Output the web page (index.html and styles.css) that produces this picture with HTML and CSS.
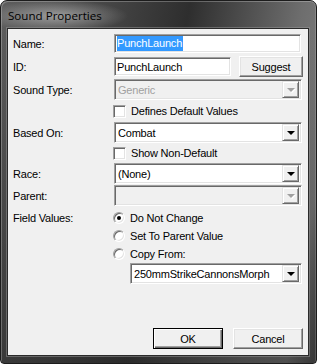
FILE: index.html
```html
<!DOCTYPE html>
<html>
<head>
<meta charset="utf-8">
<link rel="stylesheet" href="styles.css">
</head>
<body>
<div class="window">
  <div class="titlebar"><span class="title">Sound Properties</span></div>
  <div class="client">
    <div class="row r-name">
      <div class="label">Name:</div>
      <div class="field"><div class="textbox full"><span class="sel">PunchLaunch</span></div></div>
    </div>
    <div class="row r-id">
      <div class="label">ID:</div>
      <div class="field idfield">
        <div class="textbox idbox">PunchLaunch</div>
        <div class="button suggest">Suggest</div>
      </div>
    </div>
    <div class="row r-combo">
      <div class="label">Sound Type:</div>
      <div class="field"><div class="combo disabled"><span class="ctext">Generic</span><span class="dd"><span class="arrow"></span></span></div></div>
    </div>
    <div class="row r-check">
      <div class="label"></div>
      <div class="field"><span class="check"></span><span class="ctl">Defines Default Values</span></div>
    </div>
    <div class="row r-combo r-based">
      <div class="label">Based On:</div>
      <div class="field"><div class="combo"><span class="ctext">Combat</span><span class="dd"><span class="arrow"></span></span></div></div>
    </div>
    <div class="row r-check r-check2">
      <div class="label"></div>
      <div class="field"><span class="check"></span><span class="ctl">Show Non-Default</span></div>
    </div>
    <div class="row r-combo r-tight">
      <div class="label">Race:</div>
      <div class="field"><div class="combo"><span class="ctext">(None)</span><span class="dd"><span class="arrow"></span></span></div></div>
    </div>
    <div class="row r-combo r-tight">
      <div class="label">Parent:</div>
      <div class="field"><div class="combo disabled"><span class="ctext"></span><span class="dd"><span class="arrow"></span></span></div></div>
    </div>
    <div class="row r-radio r-radio1">
      <div class="label">Field Values:</div>
      <div class="field"><span class="radio on"></span><span class="rtl">Do Not Change</span></div>
    </div>
    <div class="row r-radio">
      <div class="label"></div>
      <div class="field"><span class="radio"></span><span class="rtl">Set To Parent Value</span></div>
    </div>
    <div class="row r-radio r-radio3">
      <div class="label"></div>
      <div class="field"><span class="radio"></span><span class="rtl">Copy From:</span></div>
    </div>
    <div class="row r-combo r-tight">
      <div class="label"></div>
      <div class="field copyfield"><div class="combo"><span class="ctext">250mmStrikeCannonsMorph</span><span class="dd"><span class="arrow"></span></span></div></div>
    </div>
    <div class="spacer"></div>
    <div class="buttons">
      <div class="button default">OK</div>
      <div class="button">Cancel</div>
    </div>
  </div>
</div>
</body>
</html>
```

FILE: styles.css
```css
html, body {
  margin: 0;
  padding: 0;
  background: #ffffff;
}
body {
  font-family: "Liberation Sans", Arial, sans-serif;
  font-size: 11px;
  letter-spacing: -0.2px;
  color: #000;
}
.window {
  width: 317px;
  height: 364px;
  box-sizing: border-box;
  border: 1px solid #1c1c1c;
  border-radius: 7px 7px 4px 4px;
  background:
    linear-gradient(to bottom, rgba(0,0,0,0) 0px, rgba(0,0,0,0) 28px, rgba(40,40,40,0.55) 100%),
    linear-gradient(100deg, #5e5e5e 0%, #444 30%, #2e2e2e 50%, #6e6e6e 80%, #7e7e7e 92%, #4a4a4a 100%);
  display: flex;
  flex-direction: column;
  overflow: hidden;
  box-shadow: inset 1px 1px 0 rgba(255,255,255,0.25), inset -1px 0 0 rgba(255,255,255,0.15);
}
.titlebar {
  height: 27px;
  flex: none;
  display: flex;
  align-items: center;
  padding-left: 7px;
  background: radial-gradient(ellipse 72px 16px at 55px 15px, rgba(205,205,205,0.6), rgba(205,205,205,0) 100%);
}
.title {
  font-family: "Open Sans", "Liberation Sans", sans-serif;
  font-size: 11.6px;
  letter-spacing: 0;
  color: #000;
  position: relative;
  top: 1px;
}
.client {
  flex: 1;
  margin: 0 7px 7px 6px;
  border: 1px solid #2a2a2a;
  box-shadow: 0 0 0 1px rgba(150,150,150,0.5);
  background: #f0f0f0;
  padding: 5px 5px 6px 5px;
  display: flex;
  flex-direction: column;
}
.row {
  display: flex;
  align-items: center;
  flex: none;
}
.label {
  width: 101px;
  flex: none;
}
.field {
  flex: 1;
  display: flex;
  align-items: center;
}
.r-name { height: 19px; }
.r-id { height: 21px; margin-top: 3px; }
.r-combo { height: 21px; margin-top: 2px; }
.r-check { height: 18px; margin-top: 2px; }
.r-based { margin-top: 2px; }
.r-check2 { margin-top: 1px; }
.r-tight { margin-top: 1px; }
.r-radio { height: 18px; }
.r-radio1 { margin-top: 3px; }
.r-radio3 { height: 17px; }

.textbox {
  height: 19px;
  box-sizing: border-box;
  background: #fff;
  border-top: 1px solid #a0a0a0;
  border-left: 1px solid #a0a0a0;
  border-bottom: 1px solid #ffffff;
  border-right: 1px solid #ffffff;
  box-shadow: inset 1px 1px 0 #696969, inset -1px -1px 0 #e3e3e3;
  padding: 0 2px;
  display: flex;
  align-items: center;
  white-space: nowrap;
  overflow: hidden;
}
.full { width: 187px; }
.sel {
  background: #3399ff;
  color: #fff;
  height: 15px;
  line-height: 15px;
  display: inline-block;
  padding-right: 1px;
}
.idfield { justify-content: space-between; }
.idbox { width: 117px; }
.button {
  height: 21px;
  box-sizing: border-box;
  background: #f0f0f0;
  border-top: 1px solid #ffffff;
  border-left: 1px solid #ffffff;
  border-right: 1px solid #696969;
  border-bottom: 1px solid #696969;
  box-shadow: inset -1px -1px 0 #a0a0a0, inset 1px 1px 0 #e3e3e3;
  display: flex;
  align-items: center;
  justify-content: center;
  width: 70px;
}
.suggest { width: 64px; }
.button.default {
  border: 1px solid #000;
  box-shadow: inset 1px 1px 0 #ffffff, inset -1px -1px 0 #696969, inset -2px -2px 0 #a0a0a0;
}

.combo {
  width: 188px;
  height: 21px;
  box-sizing: border-box;
  background: #fff;
  border-top: 1px solid #a0a0a0;
  border-left: 1px solid #a0a0a0;
  border-bottom: 1px solid #ffffff;
  border-right: 1px solid #ffffff;
  box-shadow: inset 1px 1px 0 #696969, inset -1px -1px 0 #e3e3e3;
  display: flex;
  align-items: center;
  padding: 2px 2px 2px 3px;
}
.copyfield { padding-left: 16px; }
.copyfield .combo { width: 172px; }
.combo.disabled { background: #f0f0f0; color: #a0a0a0; }
.ctext {
  flex: 1;
  white-space: nowrap;
  overflow: hidden;
}
.dd {
  width: 17px;
  height: 17px;
  box-sizing: border-box;
  flex: none;
  background: #f0f0f0;
  border-top: 1px solid #e3e3e3;
  border-left: 1px solid #e3e3e3;
  border-right: 1px solid #696969;
  border-bottom: 1px solid #696969;
  box-shadow: inset 1px 1px 0 #ffffff, inset -1px -1px 0 #a0a0a0;
  display: flex;
  align-items: center;
  justify-content: center;
}
.arrow {
  width: 0;
  height: 0;
  border-left: 4px solid transparent;
  border-right: 4px solid transparent;
  border-top: 4px solid #000;
  margin-top: 1px;
}
.disabled .arrow {
  border-top-color: #a0a0a0;
  filter: drop-shadow(1px 1px 0 #ffffff);
}

.check {
  width: 13px;
  height: 13px;
  box-sizing: border-box;
  background: #fff;
  border-top: 1px solid #a0a0a0;
  border-left: 1px solid #a0a0a0;
  border-bottom: 1px solid #ffffff;
  border-right: 1px solid #ffffff;
  box-shadow: inset 1px 1px 0 #696969, inset -1px -1px 0 #e3e3e3;
  margin-left: -1px;
  flex: none;
}
.ctl { margin-left: 5px; }

.radio {
  width: 12px;
  height: 12px;
  box-sizing: border-box;
  border-radius: 50%;
  background: #fff;
  border: 1px solid;
  border-color: #a0a0a0 #ffffff #ffffff #a0a0a0;
  box-shadow: inset 1px 1px 0 #696969, inset -1px -1px 0 #e3e3e3;
  flex: none;
  margin-left: -1px;
  position: relative;
}
.radio.on::after {
  content: "";
  position: absolute;
  left: 3px;
  top: 3px;
  width: 4px;
  height: 4px;
  border-radius: 50%;
  background: #000;
}
.rtl { margin-left: 5px; }

.spacer { flex: 1; }
.buttons {
  display: flex;
  justify-content: flex-end;
  gap: 10px;
  flex: none;
}
```
